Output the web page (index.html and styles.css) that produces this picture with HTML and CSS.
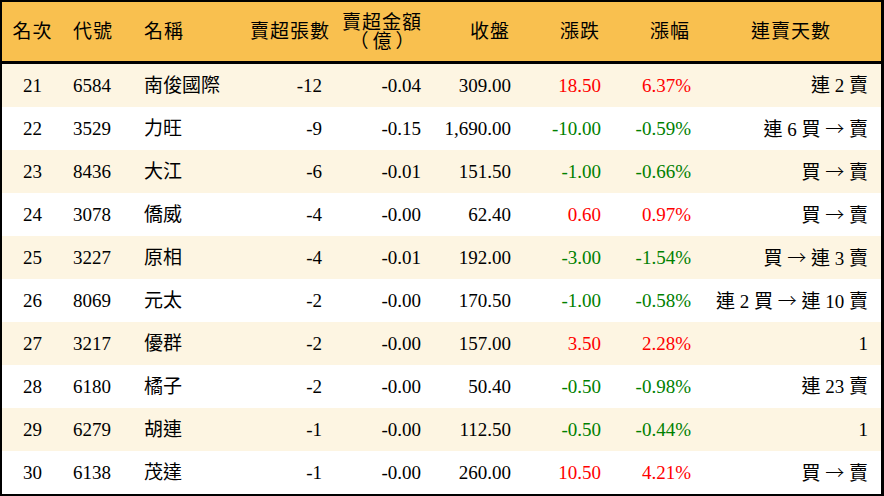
FILE: index.html
```html
<!DOCTYPE html>
<html lang="zh-Hant">
<head>
<meta charset="utf-8">
<title>賣超排行</title>
<link rel="stylesheet" href="styles.css">
</head>
<body>
<table class="rank">
  <colgroup>
    <col class="c-rank"><col class="c-code"><col class="c-name"><col class="c-vol"><col class="c-amt"><col class="c-close"><col class="c-chg"><col class="c-pct"><col class="c-days">
  </colgroup>
  <thead>
    <tr>
      <th class="center">名次</th>
      <th class="left">代號</th>
      <th class="left">名稱</th>
      <th class="right">賣超張數</th>
      <th class="right"><span class="stack">賣超金額<br><span class="unit">（億）</span></span></th>
      <th class="right">收盤</th>
      <th class="right">漲跌</th>
      <th class="right">漲幅</th>
      <th class="center">連賣天數</th>
    </tr>
  </thead>
  <tbody>
    <tr><td class="center">21</td><td>6584</td><td>南俊國際</td><td class="right">-12</td><td class="right">-0.04</td><td class="right">309.00</td><td class="right up">18.50</td><td class="right up">6.37%</td><td class="right days">連 2 賣</td></tr>
    <tr><td class="center">22</td><td>3529</td><td>力旺</td><td class="right">-9</td><td class="right">-0.15</td><td class="right">1,690.00</td><td class="right down">-10.00</td><td class="right down">-0.59%</td><td class="right days">連 6 買 <span class="arrow">→</span> 賣</td></tr>
    <tr><td class="center">23</td><td>8436</td><td>大江</td><td class="right">-6</td><td class="right">-0.01</td><td class="right">151.50</td><td class="right down">-1.00</td><td class="right down">-0.66%</td><td class="right days">買 <span class="arrow">→</span> 賣</td></tr>
    <tr><td class="center">24</td><td>3078</td><td>僑威</td><td class="right">-4</td><td class="right">-0.00</td><td class="right">62.40</td><td class="right up">0.60</td><td class="right up">0.97%</td><td class="right days">買 <span class="arrow">→</span> 賣</td></tr>
    <tr><td class="center">25</td><td>3227</td><td>原相</td><td class="right">-4</td><td class="right">-0.01</td><td class="right">192.00</td><td class="right down">-3.00</td><td class="right down">-1.54%</td><td class="right days">買 <span class="arrow">→</span> 連 3 賣</td></tr>
    <tr><td class="center">26</td><td>8069</td><td>元太</td><td class="right">-2</td><td class="right">-0.00</td><td class="right">170.50</td><td class="right down">-1.00</td><td class="right down">-0.58%</td><td class="right days">連 2 買 <span class="arrow">→</span> 連 10 賣</td></tr>
    <tr><td class="center">27</td><td>3217</td><td>優群</td><td class="right">-2</td><td class="right">-0.00</td><td class="right">157.00</td><td class="right up">3.50</td><td class="right up">2.28%</td><td class="right days">1</td></tr>
    <tr><td class="center">28</td><td>6180</td><td>橘子</td><td class="right">-2</td><td class="right">-0.00</td><td class="right">50.40</td><td class="right down">-0.50</td><td class="right down">-0.98%</td><td class="right days">連 23 賣</td></tr>
    <tr><td class="center">29</td><td>6279</td><td>胡連</td><td class="right">-1</td><td class="right">-0.00</td><td class="right">112.50</td><td class="right down">-0.50</td><td class="right down">-0.44%</td><td class="right days">1</td></tr>
    <tr><td class="center">30</td><td>6138</td><td>茂達</td><td class="right">-1</td><td class="right">-0.00</td><td class="right">260.00</td><td class="right up">10.50</td><td class="right up">4.21%</td><td class="right days">買 <span class="arrow">→</span> 賣</td></tr>
  </tbody>
</table>
</body>
</html>
```
FILE: styles.css
```css
html, body {
  margin: 0;
  padding: 0;
  background: #000;
}
.rank {
  width: 884px;
  border-collapse: separate;
  border-spacing: 0;
  table-layout: fixed;
  border-style: solid;
  border-color: #000;
  border-width: 2px 3px 2px 2px;
  font-family: "Liberation Serif", "Noto Sans CJK TC", serif;
  font-size: 19px;
  color: #000;
  background: #fff;
}
.c-rank { width: 61px; }
.c-code { width: 71px; }
.c-name { width: 106px; }
.c-vol { width: 92px; }
.c-amt { width: 99px; }
.c-close { width: 90px; }
.c-chg { width: 90px; }
.c-pct { width: 90px; }
.c-days { width: 180px; }

.rank th {
  background: #f9c04f;
  height: 59px;
  padding: 0 10px;
  font-weight: normal;
  border-bottom: 3px solid #000;
  line-height: 19px;
  vertical-align: middle;
  white-space: nowrap;
  letter-spacing: 1px;
}
.rank th.right { padding-right: 11px; }
.rank td {
  height: 43px;
  padding: 0 10px;
  line-height: 20px;
  vertical-align: middle;
  white-space: nowrap;
  text-align: left;
}
.rank td.days { padding-right: 13px; }
.rank tbody tr:nth-child(odd) td { background: #fdf5e2; }
.rank tbody tr:nth-child(even) td { background: #fff; }

.left { text-align: left; }
.right { text-align: right; }
.center { text-align: center; }
.rank td.right { text-align: right; }
.rank td.center { text-align: center; }

.stack {
  display: inline-block;
  text-align: center;
}
.unit {
  letter-spacing: 4px;
  padding-left: 4px;
}
.arrow {
  font-family: "Noto Sans CJK TC", sans-serif;
  font-weight: 300;
  font-size: 19px;
}
.up { color: #ff0000; }
.down { color: #008000; }
```
